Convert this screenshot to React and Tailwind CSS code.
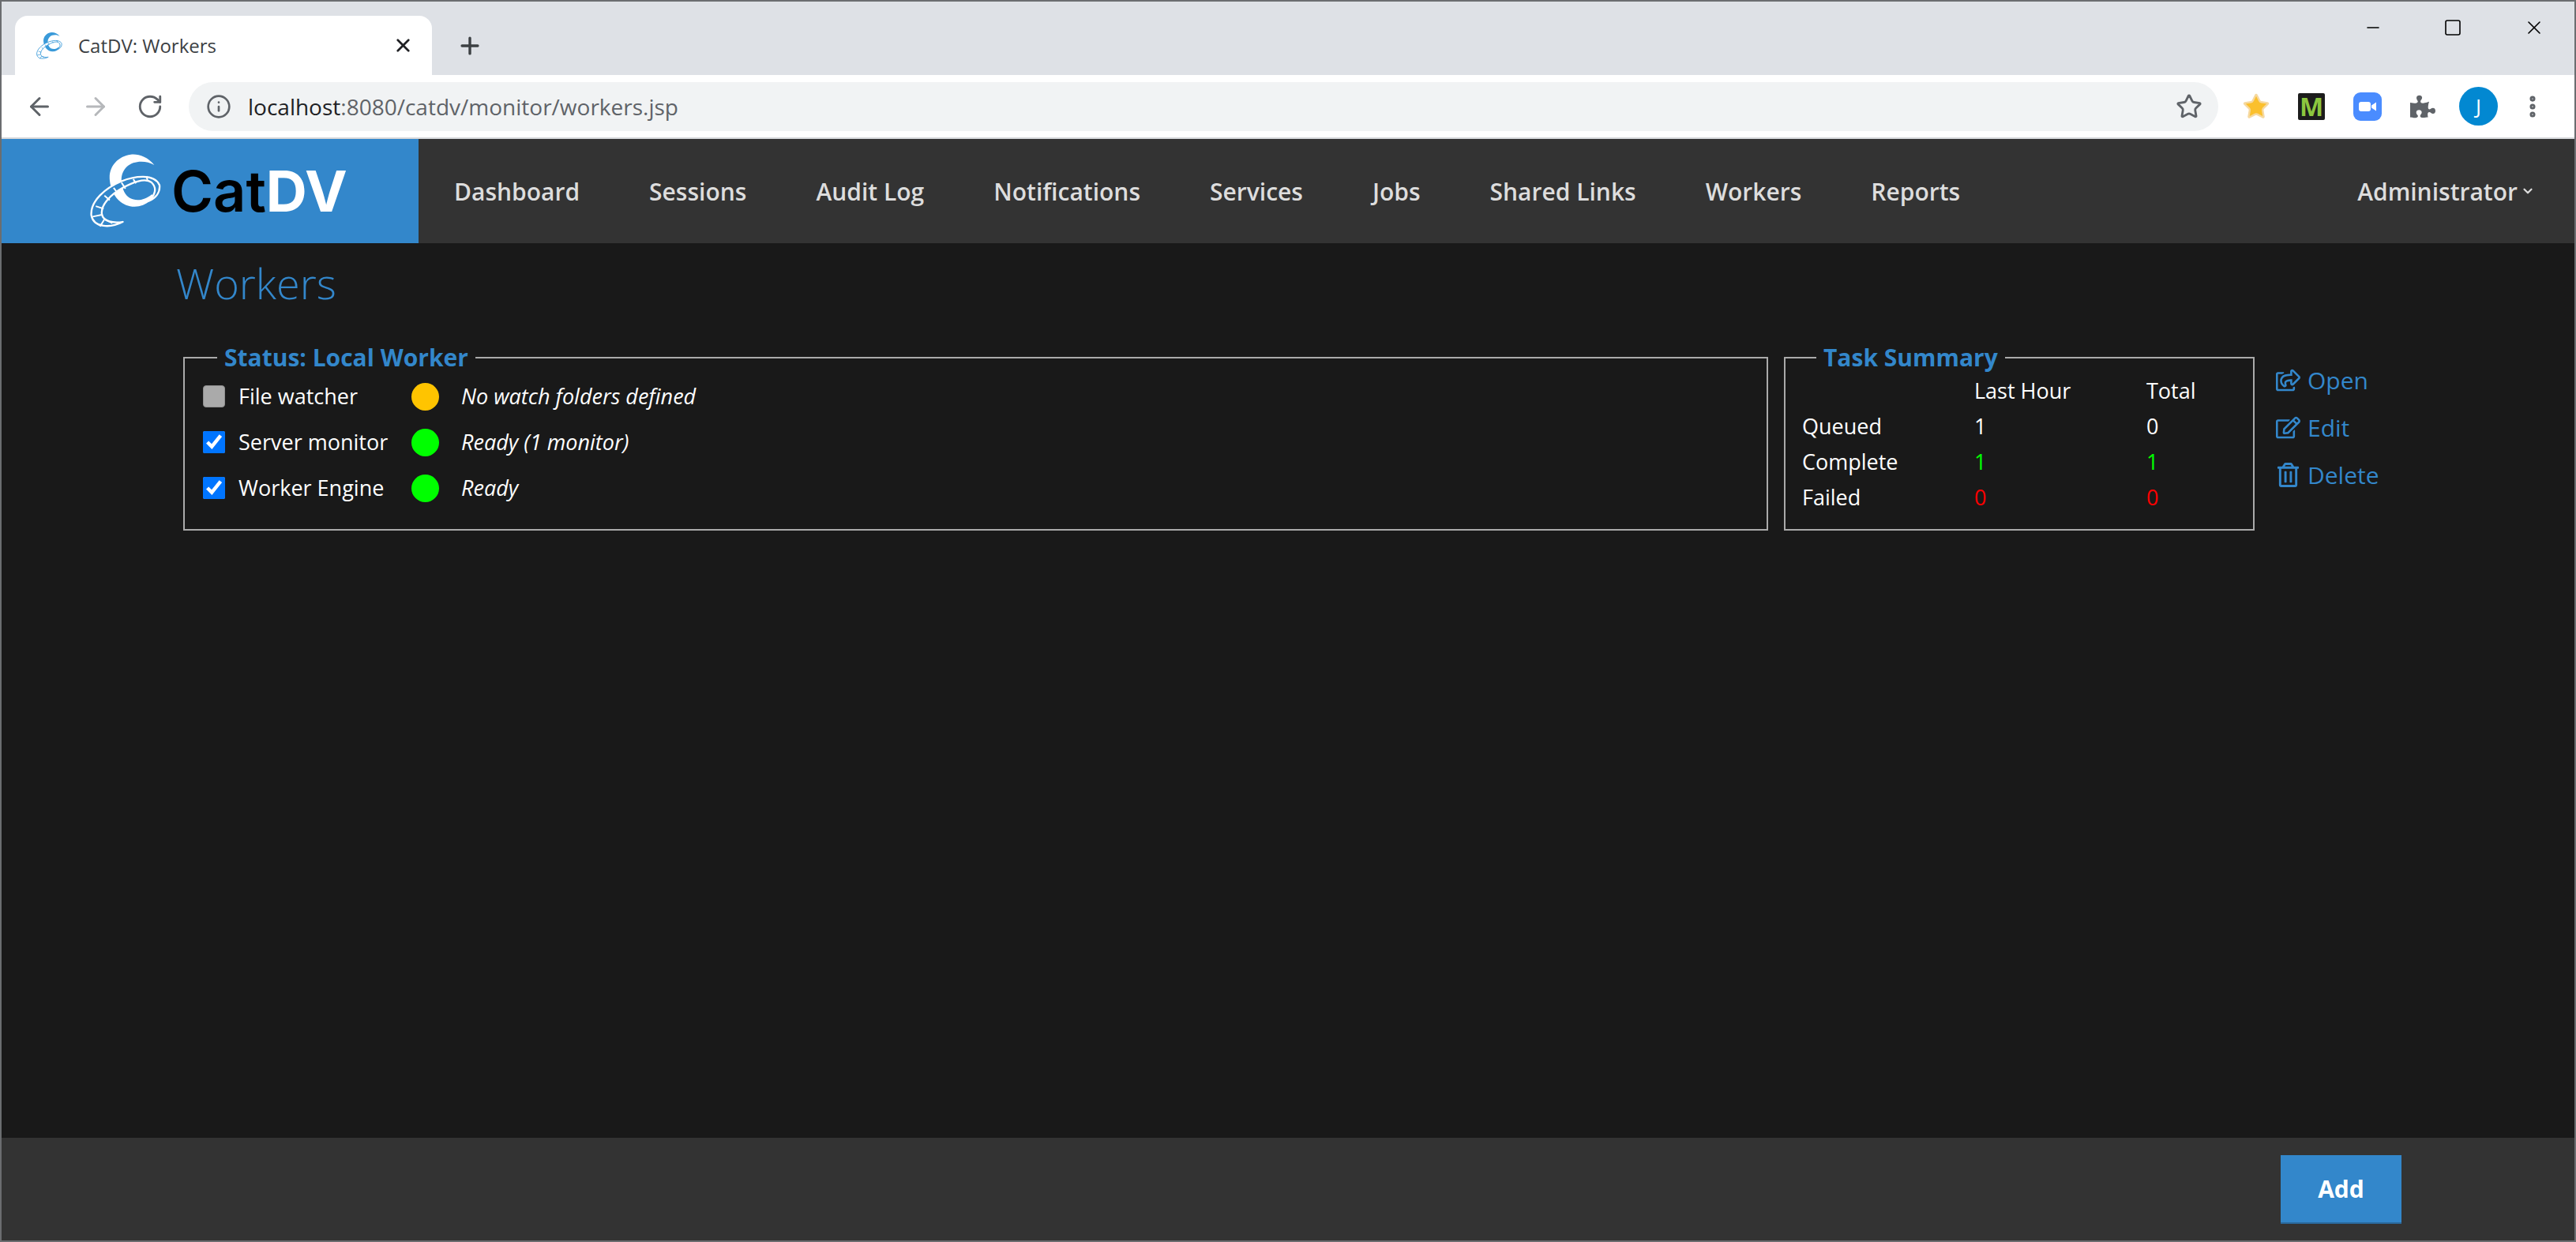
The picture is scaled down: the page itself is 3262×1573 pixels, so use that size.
import React from 'react';
import { ArrowLeft, ArrowRight, RotateCw, Info, Star, X, Plus, ChevronDown, EllipsisVertical, Minus, Square } from 'lucide-react';
import { FaPuzzlePiece, FaRegTrashAlt, FaRegEdit, FaExternalLinkSquareAlt, FaRegShareSquare } from 'react-icons/fa';

const navItems = ['Dashboard', 'Sessions', 'Audit Log', 'Notifications', 'Services', 'Jobs', 'Shared Links', 'Workers', 'Reports'];

const font = "font-['Open_Sans',sans-serif]";

// swoosh + film strip, coordinates traced from the logo
const LogoMark = ({ className, color, stripFill }) => (
  <svg viewBox="70 80 280 295" className={className}>
    <path
      d="M315 128C290 95 250 84 225 88C175 95 140 135 145 185C150 240 185 287 240 287C270 287 300 270 315 245L305 240C270 270 220 270 200 230C185 195 185 160 210 135C235 110 285 110 315 128Z"
      fill={color}
    />
    <path
      d="M195 345C150 368 85 370 75 320C70 265 130 215 190 190C240 170 315 160 335 205C338 235 318 255 295 265C320 240 325 215 305 195C280 175 230 195 195 215C150 240 110 280 115 315C120 345 160 350 195 345Z"
      fill={stripFill}
      stroke={color}
      strokeWidth="7"
      strokeLinejoin="round"
    />
    <path
      d="M285 170L290 190M235 182L245 198M190 195L205 218M160 215L175 235M125 245L145 262M92 285L122 295M80 325L115 318M108 362L125 335M125 335L155 350"
      stroke={color}
      strokeWidth="6"
      fill="none"
    />
  </svg>
);

const StatusRow = ({ label, checked, dot, status }) => (
  <div className="flex items-center h-[58px]">
    {checked ? (
      <input type="checkbox" defaultChecked className="w-[28px] h-[28px] m-0 accent-[#0075ff]" />
    ) : (
      <input type="checkbox" disabled className="w-[28px] h-[28px] m-0 appearance-none rounded-[4px] bg-[#aaaaaa] border border-[#8f8f8f]" />
    )}
    <span className="ml-[17px] w-[219px] text-white">{label}</span>
    <span className={`w-[35px] h-[35px] rounded-full ${dot}`} />
    <span className="ml-[28px] italic text-white">{status}</span>
  </div>
);

const ActionLink = ({ icon, label }) => (
  <a className="flex items-center h-[60px] text-[#3387cb] text-[30px]">
    <span className="w-[40px] flex">{icon}</span>
    {label}
  </a>
);

const App = () => {
  return (
    <div className={`h-[1573px] w-full flex flex-col border-2 border-[#6b6d70] overflow-hidden ${font}`}>
      {/* browser chrome */}
      <div className="h-[93px] bg-[#dee1e6] flex items-end shrink-0">
        <div className="ml-[17px] w-[528px] h-[75px] bg-white rounded-t-[16px] flex items-center pl-[27px] pr-[23px]">
          <LogoMark className="w-[34px] h-[36px]" color="#3a9ad9" stripFill="#ffffff" />
          <span className="ml-[19px] text-[24px] text-[#3c4043]">CatDV: Workers</span>
          <X className="ml-auto text-[#202124]" size={27} strokeWidth={2.4} />
        </div>
        <Plus className="ml-[31px] mb-[20px] text-[#3c4043]" size={34} strokeWidth={2.4} />
        <div className="ml-auto self-start flex items-center h-[66px] pr-[37px] gap-[77px] text-black">
          <Minus size={24} strokeWidth={1.6} />
          <Square size={24} strokeWidth={1.6} />
          <X size={28} strokeWidth={1.4} />
        </div>
      </div>
      <div className="h-[81px] bg-white border-b-2 border-[#d5d7da] flex items-center shrink-0 text-[#5f6368]">
        <ArrowLeft className="ml-[30px]" size={36} strokeWidth={2} />
        <ArrowRight className="ml-[35px] text-[#b6b8bb]" size={36} strokeWidth={2} />
        <RotateCw className="ml-[34px]" size={34} strokeWidth={2} />
        <div className="ml-[32px] w-[2570px] h-[62px] rounded-full bg-[#f1f3f4] flex items-center pl-[22px] pr-[20px]">
          <Info size={32} strokeWidth={2} />
          <span className="ml-[21px] text-[28px] text-[#5f6368]">
            <span className="text-[#202124]">localhost</span>:8080/catdv/monitor/workers.jsp
          </span>
          <Star className="ml-auto" size={34} strokeWidth={2} />
        </div>
        <Star className="ml-[30px]" size={36} fill="#fbc02d" stroke="#f6d9a0" strokeWidth={1.6} />
        <div className="ml-[35px] w-[34px] h-[34px] bg-[#1c1c1c] rounded-[2px] flex items-center justify-center text-[#8cc63f] text-[32px] font-bold leading-none">M</div>
        <div className="ml-[36px] w-[36px] h-[36px] bg-[#4a8cff] rounded-[9px] flex items-center justify-center">
          <svg viewBox="0 0 24 24" className="w-[24px] h-[24px]" fill="white">
            <rect x="1" y="6" width="15" height="12" rx="3" />
            <path d="M17 10.5L23 6.5V17.5L17 13.5Z" />
          </svg>
        </div>
        <FaPuzzlePiece className="ml-[36px]" size={32} />
        <div className="ml-[30px] w-[49px] h-[49px] rounded-full bg-[#0288d1] flex items-center justify-center text-white text-[26px]">J</div>
        <EllipsisVertical className="ml-[27px]" size={34} strokeWidth={3} />
      </div>

      {/* catdv nav */}
      <div className="h-[132px] bg-[#333333] flex shrink-0">
        <div className="w-[528px] bg-[#3387cb] flex items-center pl-[112px]">
          <LogoMark className="w-[93px] h-[98px]" color="#ffffff" stripFill="#3387cb" />
          <span className="ml-[10px] font-['Inter',sans-serif] text-[72px] font-semibold leading-none text-black">
            Cat<span className="font-bold text-white">DV</span>
          </span>
        </div>
        <nav className="flex items-center flex-1 pl-[1px] text-[30px] font-semibold text-[#dddddd]">
          {navItems.map((item) => (
            <a key={item} className="px-[44px]">{item}</a>
          ))}
          <a className="ml-auto pr-[50px] flex items-center">
            Administrator
            <ChevronDown className="ml-[4px]" size={18} strokeWidth={3} />
          </a>
        </nav>
      </div>

      {/* page */}
      <div className="flex-1 bg-[#191919] px-[221px] pt-[13px] pr-0">
        <h1 className="text-[54px] font-light text-[#3387cb] leading-[74px]">Workers</h1>
        <div className="flex items-start mt-[38px] ml-[9px] text-[27px]">
          <fieldset className="w-[2007px] h-[239px] border-2 border-[#aaaaaa] pl-[23px]">
            <legend className="ml-[18px] px-[9px] text-[30px] font-bold text-[#3387cb] leading-[40px]">Status: Local Worker</legend>
            <StatusRow label="File watcher" dot="bg-[#ffc400]" status="No watch folders defined" />
            <StatusRow label="Server monitor" checked dot="bg-[#00ff00]" status="Ready (1 monitor)" />
            <StatusRow label="Worker Engine" checked dot="bg-[#00ff00]" status="Ready" />
          </fieldset>
          <fieldset className="ml-[20px] w-[596px] h-[239px] border-2 border-[#aaaaaa] pl-[21px]">
            <legend className="ml-[18px] px-[9px] text-[30px] font-bold text-[#3387cb] leading-[40px]">Task Summary</legend>
            <table className="text-white border-collapse">
              <tbody>
                <tr className="h-[45px]"><td className="w-[218px]"></td><td className="w-[218px]">Last Hour</td><td>Total</td></tr>
                <tr className="h-[45px]"><td>Queued</td><td>1</td><td>0</td></tr>
                <tr className="h-[45px]"><td>Complete</td><td className="text-[#00ff00]">1</td><td className="text-[#00ff00]">1</td></tr>
                <tr className="h-[45px]"><td>Failed</td><td className="text-[#ff0000]">0</td><td className="text-[#ff0000]">0</td></tr>
              </tbody>
            </table>
          </fieldset>
          <div className="ml-[27px] mt-[18px]">
            <ActionLink icon={<FaRegShareSquare size={31} />} label="Open" />
            <ActionLink icon={<FaRegEdit size={31} />} label="Edit" />
            <ActionLink icon={<FaRegTrashAlt size={31} />} label="Delete" />
          </div>
        </div>
      </div>

      {/* footer */}
      <div className="h-[130px] bg-[#333333] shrink-0 flex justify-end items-start pt-[22px] pr-[219px]">
        <button className="w-[153px] h-[87px] bg-[#3387cb] border-b-2 border-[#2a6a9e] text-white text-[30px] font-bold">Add</button>
      </div>
    </div>
  );
};

export default App;
